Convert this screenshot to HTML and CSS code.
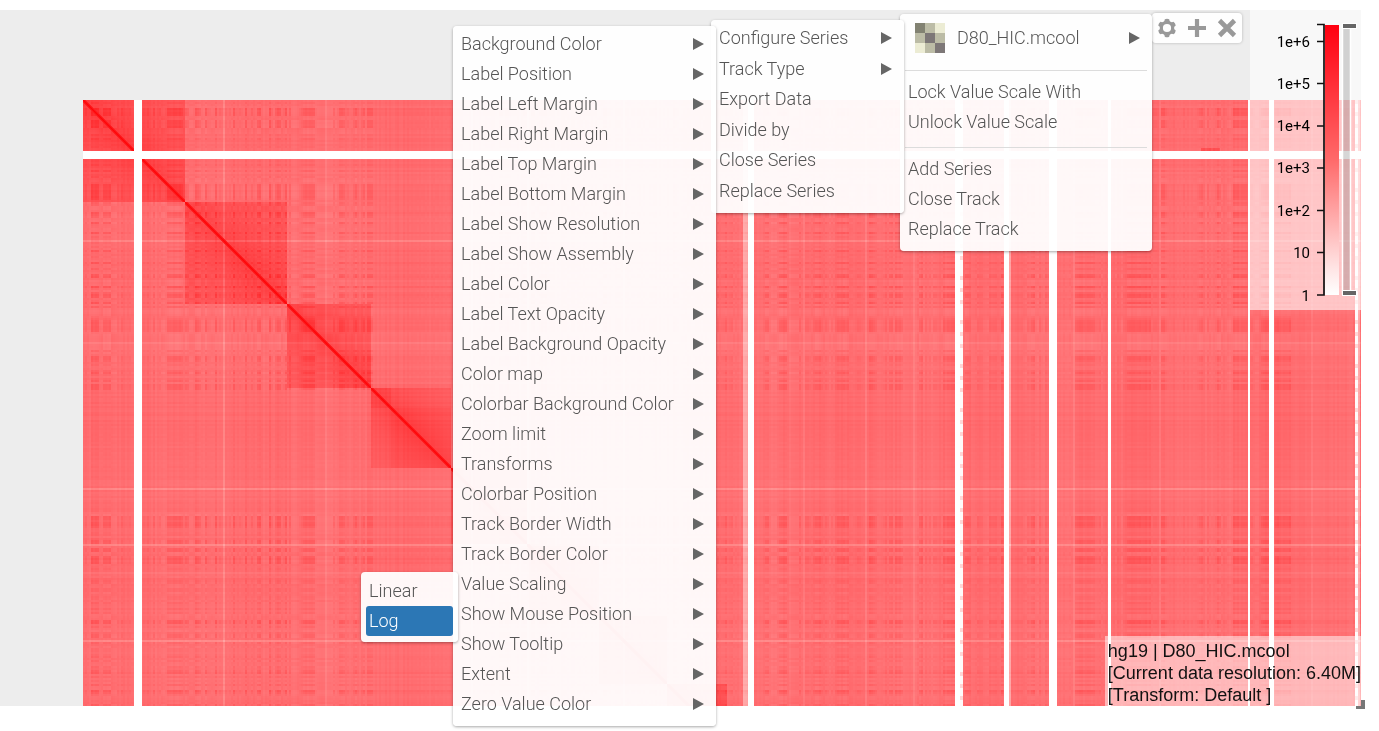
FILE: index.html
```html
<!DOCTYPE html>
<html lang="en">
<head>
<meta charset="utf-8">
<title>D80_HIC.mcool</title>
<link rel="stylesheet" href="styles.css">
</head>
<body>
<main class="view">
  <canvas class="heatmap" id="heatmap" aria-label="Contact matrix"></canvas>

  <div class="colorbar">
    <svg width="111" height="300" viewBox="0 0 111 300" role="img" aria-label="Value scale">
      <defs>
        <linearGradient id="reds" x1="0" y1="0" x2="0" y2="1">
          <stop offset="0" stop-color="#ff0010"/>
          <stop offset="0.5" stop-color="#ff6a6a"/>
          <stop offset="0.9" stop-color="#ffe4e4"/>
          <stop offset="1" stop-color="#fff"/>
        </linearGradient>
      </defs>
      <rect x="75" y="15" width="14" height="270" fill="url(#reds)"/>
      <path d="M67 14.5h7v270.500H67M67 31.500h7M67 73.500h7M67 116h7M67 158h7M67 200.500h7M67 242.500h7" fill="none" stroke="#111" stroke-width="1.700"/>
      <g class="scale-text">
        <text x="60" y="37">1e+6</text>
        <text x="60" y="79">1e+5</text>
        <text x="60" y="121">1e+4</text>
        <text x="60" y="163">1e+3</text>
        <text x="60" y="206">1e+2</text>
        <text x="60" y="248">10</text>
        <text x="60" y="291">1</text>
      </g>
      <rect x="92.500" y="14" width="8" height="270" fill="#777" fill-opacity=".3" stroke="#fff" stroke-width="1.500"/>
      <rect x="92.500" y="13.500" width="14" height="5" fill="#666" stroke="#fff"/>
      <rect x="92.500" y="280.500" width="14" height="5" fill="#666" stroke="#fff"/>
    </svg>
  </div>

  <div class="track-label">hg19 | D80_HIC.mcool<br>[Current data resolution: 6.40M]<br>[Transform: Default ]</div>
  <svg class="resize" width="9" height="9" viewBox="0 0 9 9"><path d="M5 0h4v9H0V6h5z" fill="#777"/></svg>

  <div class="toolbar">
    <button aria-label="Configure track"><svg width="20" height="20" viewBox="0 0 20 20"><circle cx="10" cy="10" r="5.700" fill="none" stroke="#999" stroke-width="3.200"/><g fill="#999"><path id="tooth" d="M7.800 1.200q2.200-1 4.400 0l.8 3.300H7z"/><use href="#tooth" transform="rotate(60 10 10)"/><use href="#tooth" transform="rotate(120 10 10)"/><use href="#tooth" transform="rotate(180 10 10)"/><use href="#tooth" transform="rotate(240 10 10)"/><use href="#tooth" transform="rotate(300 10 10)"/></g></svg></button>
    <button aria-label="Add track"><svg width="20" height="20" viewBox="0 0 20 20"><path d="M10 1v18M1 10h18" stroke="#999" stroke-width="4.200"/></svg></button>
    <button aria-label="Close track"><svg width="20" height="20" viewBox="0 0 20 20"><path d="M2.500 2.500l15 15M17.500 2.500l-15 15" stroke="#999" stroke-width="4.600"/></svg></button>
  </div>

  <nav class="menu menu-track">
    <button class="series has-sub"><svg class="thumb" width="30" height="30" viewBox="0 0 3 3" shape-rendering="crispEdges"><path fill="#ececd4" d="M0 0h3v3H0z"/><path fill="#bcbca6" d="M1 0h1v1H1zM0 1h1v1H0zM2 1h1v1H2zM1 2h1v1H1z"/><path fill="#828272" d="M0 0h1v1H0z"/><path fill="#7d7777" d="M1 1h1v1H1zM2 2h1v1H2z"/></svg><span>D80_HIC.mcool</span></button>
    <hr>
    <button>Lock Value Scale With</button>
    <button>Unlock Value Scale</button>
    <hr>
    <button>Add Series</button>
    <button>Close Track</button>
    <button>Replace Track</button>
  </nav>

  <nav class="menu menu-series">
    <button class="has-sub">Configure Series</button>
    <button class="has-sub">Track Type</button>
    <button>Export Data</button>
    <button>Divide by</button>
    <button>Close Series</button>
    <button>Replace Series</button>
  </nav>

  <nav class="menu menu-config">
    <button class="has-sub">Background Color</button>
    <button class="has-sub">Label Position</button>
    <button class="has-sub">Label Left Margin</button>
    <button class="has-sub">Label Right Margin</button>
    <button class="has-sub">Label Top Margin</button>
    <button class="has-sub">Label Bottom Margin</button>
    <button class="has-sub">Label Show Resolution</button>
    <button class="has-sub">Label Show Assembly</button>
    <button class="has-sub">Label Color</button>
    <button class="has-sub">Label Text Opacity</button>
    <button class="has-sub">Label Background Opacity</button>
    <button class="has-sub">Color map</button>
    <button class="has-sub">Colorbar Background Color</button>
    <button class="has-sub">Zoom limit</button>
    <button class="has-sub">Transforms</button>
    <button class="has-sub">Colorbar Position</button>
    <button class="has-sub">Track Border Width</button>
    <button class="has-sub">Track Border Color</button>
    <button class="has-sub">Value Scaling</button>
    <button class="has-sub">Show Mouse Position</button>
    <button class="has-sub">Show Tooltip</button>
    <button class="has-sub">Extent</button>
    <button class="has-sub">Zero Value Color</button>
  </nav>

  <nav class="menu menu-scaling">
    <button>Linear</button>
    <button class="active">Log</button>
  </nav>
</main>
<script src="heatmap.js"></script>
</body>
</html>
```
FILE: styles.css
```css
* { box-sizing: border-box; }
body {
  margin: 0;
  background: #fff;
  font-family: Roboto, "Open Sans", sans-serif;
  font-weight: 300;
}
.view {
  position: relative;
  display: flex;
  height: calc(100vh - 35px);
  margin: 10px 18px 25px 0;
  padding: 90px 0 0 83px;
  background: #ededed;
}
.heatmap {
  flex: 1;
  min-width: 0;
  width: 100%;
  height: 100%;
}
.colorbar {
  position: absolute;
  top: 0;
  right: 0;
  background: rgba(255, 255, 255, .6);
}
.colorbar svg { display: block; }
.scale-text {
  font: 400 15px Roboto, sans-serif;
  text-anchor: end;
}
.track-label {
  position: absolute;
  right: 0;
  bottom: 0;
  padding: 4px 0 0 3px;
  background: rgba(255, 255, 255, .5);
  color: #111;
  font: 18px/22px "Liberation Sans", Arial, sans-serif;
  white-space: nowrap;
}
.resize {
  position: absolute;
  right: -4px;
  bottom: -3px;
}
button {
  border: 0;
  background: none;
  color: #555;
  font: inherit;
  text-align: left;
  cursor: pointer;
}
.toolbar {
  position: absolute;
  top: 3px;
  right: 119px;
  display: flex;
  gap: 10px;
  padding: 5px;
  background: rgba(255, 255, 255, .9);
  border-radius: 4px;
  box-shadow: 0 0 3px rgba(0, 0, 0, .25);
}
.toolbar button, .toolbar svg {
  display: block;
  padding: 0;
}
.menu {
  position: absolute;
  display: flex;
  flex-direction: column;
  padding: 3px 5px 7px;
  background: rgba(255, 255, 255, .95);
  border-radius: 4px;
  box-shadow: 0 1px 3px rgba(0, 0, 0, .35);
  font-size: 18px;
  line-height: 30px;
}
.menu button {
  display: flex;
  align-items: center;
  justify-content: space-between;
  min-height: 30px;
  padding: 0 3px;
  border-radius: 3px;
  white-space: nowrap;
}
.menu .has-sub { padding-right: 7px; }
.menu .has-sub::after {
  content: "";
  border-left: 11px solid #666;
  border-top: 6px solid transparent;
  border-bottom: 6px solid transparent;
}
.menu hr {
  width: 100%;
  margin: 10px 0 6px;
  border: 0;
  border-top: 1px solid #dcdcdc;
}
.menu-track {
  top: 4px;
  right: 209px;
  width: 252px;
  padding-top: 2px;
}
.menu .series {
  min-height: 44px;
  justify-content: flex-start;
  gap: 12px;
  padding-left: 10px;
}
.series span { flex: 1; }
.menu-series {
  top: 10px;
  right: 457px;
  width: 193px;
  height: 193px;
  justify-content: space-between;
}
.menu-config {
  top: 16px;
  right: 645px;
  width: 263px;
}
.menu-scaling {
  top: 562px;
  right: 903px;
  width: 97px;
  padding: 4px 5px 6px;
}
.menu .active {
  background: #2c77b5;
  color: #fff;
}
```
FILE: heatmap.js
```javascript
const canvas = document.getElementById('heatmap');

let seed = 7;
const random = () => {
  seed = (seed * 1664525 + 1013904223) % 4294967296;
  return seed / 4294967296;
};
const inside = (list, p) => list.some(([a, b]) => p >= a && p < b);

// genome features along one axis, in matrix pixels
const gaps = [[51, 59], [665, 671], [872, 877], [921, 926], [966, 974], [1025, 1028], [1165, 1167], [1186, 1191]];
const sparse = [[877, 880], [1272, 1275]];
const thin = [[660, 665], [926, 928], [1275, 1277]];
const faint = [[140, 142], [387, 389], [444, 446], [540, 542]];
const fainter = [[242, 244], [471, 473], [720, 722], [782, 784], [830, 832], [990, 992], [1075, 1077], [1228, 1230]];
const active = [[8, 16], [20, 28], [84, 99], [102, 104], [112, 117], [121, 123], [131, 134], [149, 152], [161, 164], [173, 177], [186, 188], [194, 197], [201, 204], [219, 231], [255, 262], [271, 273], [279, 281], [284, 289],
  [415, 428], [439, 443], [447, 452], [456, 464], [520, 524], [533, 537], [570, 574], [590, 594], [641, 644], [682, 686], [696, 703], [732, 737], [754, 766], [786, 792], [805, 810], [812, 819], [835, 840], [859, 871], [882, 885], [918, 921], [947, 952], [992, 1012], [1044, 1068], [1078, 1081], [1115, 1119], [1134, 1138], [1150, 1163], [1178, 1186], [1191, 1207]];
const quiet = [[28, 34], [78, 82], [105, 110], [180, 185], [207, 215], [234, 250], [688, 694], [706, 716]];
const blocks = [[0, 102], [102, 204], [204, 287], [287, 367], [367, 444], [444, 515], [515, 583], [583, 644], [644, 720]];

const bins = Array.from({ length: 2000 }, (_, i) => {
  const p = i * 2;
  const smooth = (p > 289 && p < 410) || p > 1207;
  let a = (random() - 0.5) * (smooth ? 0.6 : 2);
  if (inside(active, p)) a = 1.3 + random() * 0.9;
  if (inside(quiet, p)) a = -1.1;
  let level = (random() - 0.5) * 0.026 + Math.sin(p / 23) * 0.008;
  if (inside(faint, p)) level -= 0.1;
  if (inside(fainter, p)) level -= 0.05;
  return { a, level, block: blocks.findIndex(([s, e]) => p >= s && p < e) };
});

function value(x, y) {
  if (inside(gaps, x) || inside(gaps, y)) return 0;
  if (inside(sparse, x)) return ((y >> 2) * 37 % 11) < 3 ? 0.16 : 0.02;
  const c = bins[x >> 1];
  const r = bins[y >> 1];
  const d = Math.abs(x - y);
  let v = 0.57 + c.level + r.level + c.a * r.a * 0.014 + (c.a + r.a) * 0.007;
  if (c.block >= 0 && c.block === r.block) {
    v += 0.09 + 0.09 * Math.exp(-d / 35);
    if (x >= 287 && (x < 308) !== (y < 308)) v -= 0.03;
    if (d < 3) v = 0.98 - d * 0.05;
  }
  if (inside(thin, x)) v -= 0.22;
  if (x > 1117 && x < 1137 && y > 47 && y < 51) v = 0.7 + c.level * 2;
  return v;
}

function draw() {
  const w = canvas.width = canvas.clientWidth;
  const h = canvas.height = canvas.clientHeight;
  const ctx = canvas.getContext('2d');
  const img = ctx.createImageData(w, h);
  for (let y = 0, k = 0; y < h; y++) {
    for (let x = 0; x < w; x++, k += 4) {
      const v = Math.min(1, value(x, y));
      img.data[k] = 255;
      img.data[k + 1] = 255 * (1 - v);
      img.data[k + 2] = 255 * (1 - v) + (v > 0.5 ? 3 : 0);
      img.data[k + 3] = 255;
    }
  }
  ctx.putImageData(img, 0, 0);
}

draw();
window.addEventListener('resize', draw);
```
